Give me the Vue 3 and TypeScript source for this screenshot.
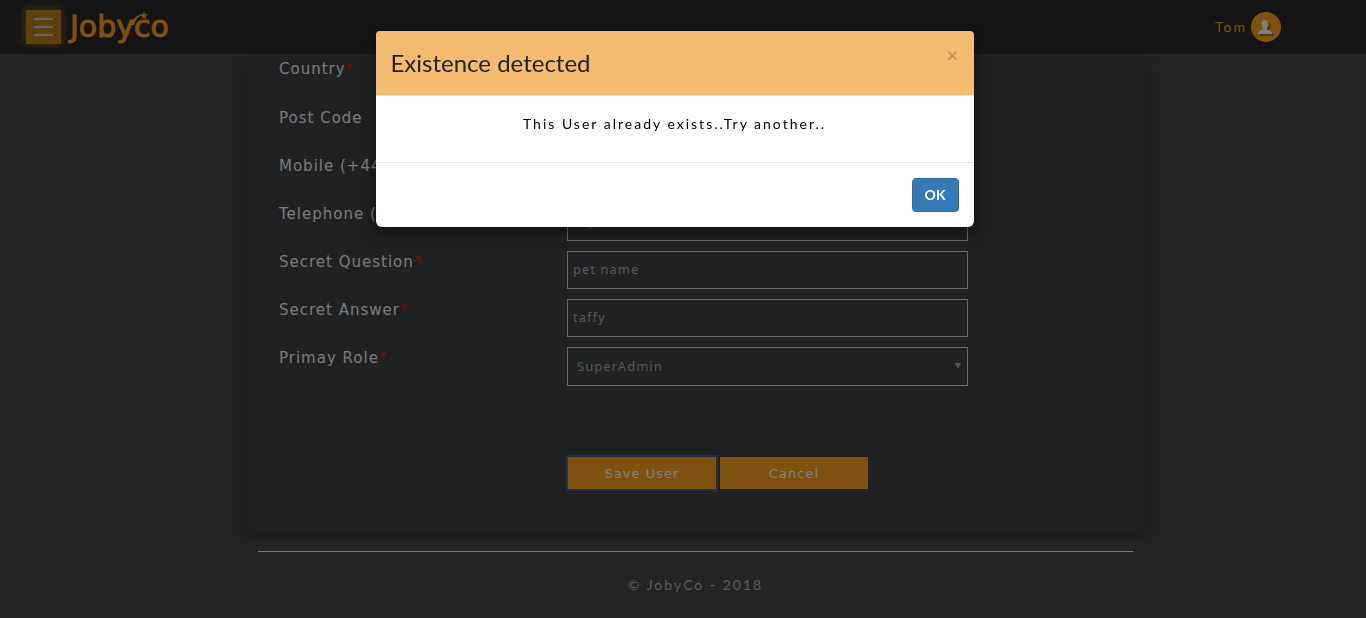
<script setup lang="ts">
import { ref } from 'vue'

interface Field {
  id: string
  label: string
  required: boolean
  value: string
  placeholder?: string
  options?: string[]
}

const fields = ref<Field[]>([
  { id: 'country', label: 'Country', required: true, value: '', options: [''] },
  { id: 'postcode', label: 'Post Code', required: false, value: '' },
  { id: 'mobile', label: 'Mobile (+44)', required: true, value: '' },
  { id: 'telephone', label: 'Telephone (+44)', required: false, value: '', placeholder: 'e.g.' },
  { id: 'question', label: 'Secret Question', required: true, value: 'pet name' },
  { id: 'answer', label: 'Secret Answer', required: true, value: 'taffy' },
  { id: 'role', label: 'Primay Role', required: true, value: 'SuperAdmin', options: ['SuperAdmin'] },
])

const modalOpen = ref(true)
const close = () => { modalOpen.value = false }
</script>

<template>
  <div class="page">
    <header class="topbar">
      <button class="burger" type="button" aria-label="Menu">
        <span></span><span></span><span></span>
      </button>
      <a class="brand" href="#">
        <span>Jobyco</span>
        <svg class="comet" width="22" height="18" viewBox="0 0 22 18" aria-hidden="true">
          <path d="M3 14C4 8 8 4 15 3.500C10 6 7 9 6 14Z" fill="#fca41c" />
          <path d="M16 0l1 3 3 .3-2.300 2 .8 3-2.500-1.700-2.500 1.700.8-3-2.300-2 3-.3z" fill="#fca41c" />
        </svg>
      </a>
      <a class="account" href="#">
        <span>Tom</span>
        <svg width="30" height="30" viewBox="0 0 30 30" aria-hidden="true">
          <circle cx="15" cy="15" r="15" fill="#fca41c" />
          <path transform="translate(2 2)" d="M14 8c3 0 3.600 2.200 3.400 4.500-.1 1.500-.7 2.700-1.400 3.500v1.700c2.600.7 5 1.600 5 4.300H7c0-2.700 2.400-3.600 5-4.300V16c-.7-.8-1.300-2-1.400-3.500C10.400 10.200 11 8 14 8z" fill="#a86c10" />
          <path d="M14 8c3 0 3.600 2.200 3.400 4.500-.1 1.500-.7 2.700-1.400 3.500v1.700c2.600.7 5 1.600 5 4.300H7c0-2.700 2.400-3.600 5-4.300V16c-.7-.8-1.300-2-1.400-3.500C10.400 10.200 11 8 14 8z" fill="#fff" />
        </svg>
      </a>
    </header>

    <main class="content">
      <form class="panel" @submit.prevent>
        <div v-for="f in fields" :key="f.id" class="row">
          <label :for="f.id">{{ f.label }}<span v-if="f.required" class="star">*</span></label>
          <div v-if="f.options" class="select">
            <select :id="f.id" v-model="f.value">
              <option v-for="o in f.options" :key="o">{{ o }}</option>
            </select>
            <svg width="6" height="6" viewBox="0 0 6 6" aria-hidden="true"><path d="M0 0h6L3 6z" fill="#b0b0b0" /></svg>
          </div>
          <input v-else :id="f.id" v-model="f.value" type="text" :placeholder="f.placeholder" />
        </div>
        <div class="actions">
          <button class="save" type="submit">Save User</button>
          <button type="button">Cancel</button>
        </div>
      </form>
      <footer class="foot">© JobyCo - 2018</footer>
    </main>

    <div v-if="modalOpen" class="backdrop">
      <section class="modal" role="dialog" aria-modal="true" aria-labelledby="modal-title">
        <div class="modal-head">
          <h2 id="modal-title">Existence detected</h2>
          <button class="close" type="button" aria-label="Close" @click="close">×</button>
        </div>
        <p class="modal-body">This User already exists..Try another..</p>
        <div class="modal-foot">
          <button class="ok" type="button" @click="close">OK</button>
        </div>
      </section>
    </div>
  </div>
</template>

<style>
body {
  margin: 0;
  background: #484848;
  overflow: hidden;
}
</style>

<style scoped>
* {
  box-sizing: border-box;
}
.page {
  min-height: 100vh;
  background: #484848;
  font-family: Lato, "Liberation Sans", sans-serif;
}
button,
input,
select {
  font: inherit;
  letter-spacing: inherit;
}
.topbar {
  position: relative;
  z-index: 1;
  display: flex;
  align-items: center;
  height: 54px;
  padding: 0 85px 0 26px;
  background: #282828;
}
.burger {
  display: flex;
  flex-direction: column;
  gap: 6px;
  width: 35px;
  height: 34px;
  padding: 8px;
  border: 0;
  background: #be801e;
  box-shadow: 0 0 8px #9a7a10;
}
.burger span {
  height: 2px;
  background: #c4c4c8;
}
.brand {
  position: relative;
  margin-left: 9px;
  color: #fca41c;
  font: 30px/34px "DejaVu Sans", sans-serif;
  -webkit-text-stroke: 1px #fca41c;
  text-decoration: none;
}
.comet {
  position: absolute;
  left: 58px;
  top: 1px;
}
.account {
  display: flex;
  align-items: center;
  gap: 4px;
  margin-left: auto;
  color: #fca41c;
  font-size: 14px;
  letter-spacing: 2px;
  text-decoration: none;
}
.account span {
  padding-bottom: 2px;
}
.content {
  max-width: 930px;
  margin: 0 auto;
  padding-left: 25px;
}
.panel {
  min-height: 477px;
  padding: 4px 36px 42px;
  border-radius: 4px;
  background: #404244;
  box-shadow: 0 4px 12px rgba(0, 0, 0, 0.25);
}
.row {
  display: grid;
  grid-template-columns: 288px minmax(0, 401px);
  align-items: start;
  margin-bottom: 10px;
}
.row label {
  color: #f4f4f4;
  font: 15px/22px "DejaVu Sans", sans-serif;
  letter-spacing: 1px;
}
.row .star {
  color: #e01818;
}
.row input,
.row select {
  display: block;
  width: 100%;
  height: 38px;
  padding: 0 5px 2px;
  border: 1px solid #d4d4d4;
  border-radius: 0;
  background: transparent;
  color: #b0b0b0;
  font: 13px "Noto Sans", sans-serif;
  letter-spacing: 1px;
  outline: 0;
}
.row input::placeholder {
  color: #909090;
}
.select {
  position: relative;
}
.row select {
  height: 39px;
  padding: 0 9px 2px;
  appearance: none;
}
.select svg {
  position: absolute;
  right: 7px;
  top: 16px;
}
.actions {
  display: flex;
  gap: 4px;
  margin: 71px 0 0 289px;
}
.actions button {
  width: 148px;
  height: 32px;
  border: 0;
  background: #fca41c;
  color: #fff;
  font: 13px "DejaVu Sans", sans-serif;
  letter-spacing: 1px;
}
.actions .save {
  outline: 2px solid #405f9c;
}
.foot {
  margin: 20px 15px 0;
  padding-top: 23px;
  border-top: 1px solid #f0f0f0;
  color: #b8b8b8;
  font-size: 14px;
  line-height: 20px;
  letter-spacing: 2px;
  text-align: center;
}
.backdrop {
  position: fixed;
  inset: 0;
  z-index: 2;
  padding: 31px 17px 0 0;
  background: rgba(0, 0, 0, 0.5);
}
.modal {
  max-width: 598px;
  margin: 0 auto;
  border-radius: 6px;
  background: #fff;
  box-shadow: 0 5px 15px rgba(0, 0, 0, 0.5);
}
.modal-head {
  display: flex;
  justify-content: space-between;
  align-items: flex-start;
  padding: 15px;
  border-bottom: 1px solid #e5e5e5;
  border-radius: 4px 4px 0 0;
  background: #f4bc70;
}
.modal-head h2 {
  margin: 0;
  color: #222;
  font-size: 24px;
  font-weight: 400;
  line-height: 34px;
}
.close {
  padding: 0;
  border: 0;
  background: none;
  color: #c39659;
  font-size: 21px;
  font-weight: 700;
  line-height: 18px;
  text-shadow: 0 1px 0 #fcd8a4;
}
.modal-body {
  margin: 0;
  padding: 18px 15px 28px;
  color: #000;
  font-size: 14px;
  line-height: 20px;
  letter-spacing: 2px;
  text-align: center;
}
.modal-foot {
  display: flex;
  justify-content: flex-end;
  padding: 15px;
  border-top: 1px solid #e5e5e5;
}
.ok {
  height: 34px;
  padding: 0 12px 2px;
  border: 1px solid #2e6da4;
  border-radius: 4px;
  background: #337ab7;
  color: #fff;
  font-size: 14px;
  font-weight: 700;
}
</style>
